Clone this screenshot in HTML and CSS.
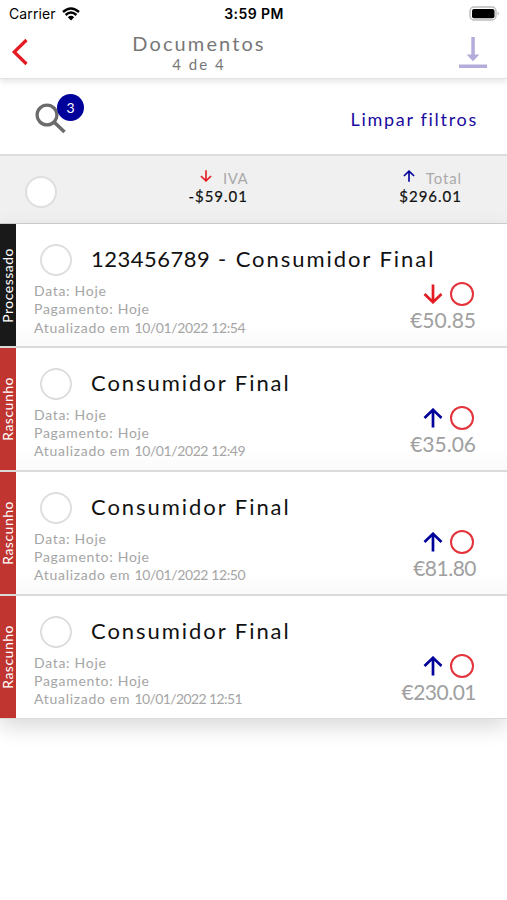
FILE: index.html
```html
<!DOCTYPE html>
<html lang="pt">
<head>
    <meta charset="UTF-8">
    <meta name="viewport" content="width=device-width, initial-scale=1.0">
    <title>Documentos</title>
    <link rel="stylesheet" href="styles.css">
</head>
<body>
    <svg class="sprite" width="0" height="0">
        <symbol id="arrow" viewBox="0 0 20 20">
            <path d="M10 19.5V2M1.5 10L10 1.8L18.5 10" fill="none" stroke="currentColor" stroke-width="2.7"/>
        </symbol>
    </svg>

    <header class="header">
        <div class="status-bar">
            <div class="carrier">
                <span class="carrier-name">Carrier</span>
                <svg width="18" height="14" viewBox="0 0 18 14">
                    <path d="M1 5Q9-2 17 5M3.6 8Q9 3 14.4 8" fill="none" stroke="#000" stroke-width="2.4"/>
                    <path d="M5.8 10.2Q9 7.4 12.2 10.2L9 13.6Z"/>
                </svg>
            </div>
            <div class="time">3:59 PM</div>
            <svg class="battery" width="32" height="16" viewBox="0 0 32 16">
                <rect x="1" y="1" width="26" height="13" rx="4" fill="#fff" stroke="#bbb" stroke-width="1.4"/>
                <rect x="3" y="3" width="22.5" height="9.3" rx="2"/>
                <path d="M28.7 5.5Q31 7.5 28.7 9.5Z" fill="#aaa"/>
            </svg>
        </div>
        <div class="nav">
            <svg class="back" width="18" height="28" viewBox="0 0 18 28">
                <path d="M15.5 2L3.2 14L15.5 26" fill="none" stroke="#e31b23" stroke-width="3.2"/>
            </svg>
            <div class="nav-title">
                <h1>Documentos</h1>
                <p>4 de 4</p>
            </div>
            <svg class="download" width="28" height="32" viewBox="0 0 28 32">
                <path d="M12.3 0h3.5v17.5h4.6L14 24.2L7.6 17.5h4.7ZM0 27.5h28v3.4H0Z" fill="#b3addb"/>
            </svg>
        </div>
    </header>

    <div class="filters">
        <div class="search">
            <svg width="32" height="32" viewBox="0 0 32 32">
                <circle cx="12" cy="12" r="9.9" fill="none" stroke="#6b6b6b" stroke-width="3.2"/>
                <path d="M19 19L29.5 29" stroke="#6b6b6b" stroke-width="3.6"/>
            </svg>
            <span class="badge">3</span>
        </div>
        <a class="clear-filters">Limpar filtros</a>
    </div>

    <div class="summary">
        <span class="check"></span>
        <div class="sum iva">
            <div class="sum-label"><svg class="small-arrow down"><use href="#arrow"/></svg><span>IVA</span></div>
            <div class="sum-value">-$59.01</div>
        </div>
        <div class="sum total">
            <div class="sum-label"><svg class="small-arrow up"><use href="#arrow"/></svg><span>Total</span></div>
            <div class="sum-value">$296.01</div>
        </div>
    </div>

    <main class="list">
        <div class="row">
            <div class="status processed"><span>Processado</span></div>
            <div class="content">
                <div class="client"><span class="check"></span><h2><span class="tax-id">123456789</span> - Consumidor Final</h2></div>
                <div class="details">
                    <div class="info">
                        <p>Data: Hoje</p>
                        <p>Pagamento: Hoje</p>
                        <p>Atualizado em <span class="stamp">10/01/2022 12:54</span></p>
                    </div>
                    <div class="amount">
                        <div class="icons"><svg class="arrow down"><use href="#arrow"/></svg><span class="ring"></span></div>
                        <div class="price">€50.85</div>
                    </div>
                </div>
            </div>
        </div>
        <div class="row">
            <div class="status draft"><span>Rascunho</span></div>
            <div class="content">
                <div class="client"><span class="check"></span><h2>Consumidor Final</h2></div>
                <div class="details">
                    <div class="info">
                        <p>Data: Hoje</p>
                        <p>Pagamento: Hoje</p>
                        <p>Atualizado em <span class="stamp">10/01/2022 12:49</span></p>
                    </div>
                    <div class="amount">
                        <div class="icons"><svg class="arrow up"><use href="#arrow"/></svg><span class="ring"></span></div>
                        <div class="price">€35.06</div>
                    </div>
                </div>
            </div>
        </div>
        <div class="row">
            <div class="status draft"><span>Rascunho</span></div>
            <div class="content">
                <div class="client"><span class="check"></span><h2>Consumidor Final</h2></div>
                <div class="details">
                    <div class="info">
                        <p>Data: Hoje</p>
                        <p>Pagamento: Hoje</p>
                        <p>Atualizado em <span class="stamp">10/01/2022 12:50</span></p>
                    </div>
                    <div class="amount">
                        <div class="icons"><svg class="arrow up"><use href="#arrow"/></svg><span class="ring"></span></div>
                        <div class="price narrow">€81.80</div>
                    </div>
                </div>
            </div>
        </div>
        <div class="row">
            <div class="status draft"><span>Rascunho</span></div>
            <div class="content">
                <div class="client"><span class="check"></span><h2>Consumidor Final</h2></div>
                <div class="details">
                    <div class="info">
                        <p>Data: Hoje</p>
                        <p>Pagamento: Hoje</p>
                        <p>Atualizado em <span class="stamp narrow">10/01/2022 12:51</span></p>
                    </div>
                    <div class="amount">
                        <div class="icons"><svg class="arrow up"><use href="#arrow"/></svg><span class="ring"></span></div>
                        <div class="price narrow">€230.01</div>
                    </div>
                </div>
            </div>
        </div>
    </main>
</body>
</html>
```
FILE: styles.css
```css
* {
    box-sizing: border-box;
}
body {
    margin: 0;
    min-height: 100vh;
    background-color: #fff;
    color: #111;
    font-family: Lato, sans-serif;
}
h1, h2, p {
    margin: 0;
    font-weight: 400;
}
svg {
    display: block;
    flex-shrink: 0;
}
.sprite {
    display: none;
}

/* header */
.header {
    height: 79px;
    border-bottom: 1px solid #e2e2e2;
    box-shadow: 0 3px 6px rgba(0, 0, 0, 0.1);
}
.status-bar {
    display: grid;
    grid-template-columns: 1fr auto 1fr;
    align-items: center;
    height: 27px;
    padding: 0 6px 0 9px;
    font-family: Inter, sans-serif;
    font-size: 14px;
    color: #000;
}
.carrier {
    display: flex;
    align-items: center;
    gap: 6px;
    letter-spacing: 0.1px;
}
.time {
    font-weight: 600;
    font-size: 14px;
    letter-spacing: 0.4px;
    margin-right: 2px;
}
.battery {
    justify-self: end;
}
.nav {
    display: grid;
    grid-template-columns: 110px 178px 1fr;
    align-items: start;
}
.back {
    margin: 11px 0 0 11px;
}
.nav-title {
    text-align: center;
    color: #777;
}
.nav-title h1 {
    font-size: 20px;
    line-height: 24px;
    margin-top: 4px;
    letter-spacing: 2.1px;
}
.nav-title p {
    font-size: 15px;
    line-height: 19px;
    letter-spacing: 2px;
}
.download {
    justify-self: end;
    margin: 10px 20px 0 0;
}

/* filters */
.filters {
    display: flex;
    justify-content: space-between;
    height: 75px;
    padding: 0 29px 0 35px;
}
.search {
    position: relative;
    height: 32px;
    margin-top: 24px;
}
.badge {
    position: absolute;
    left: 22px;
    top: -9px;
    width: 27px;
    height: 27px;
    border-radius: 50%;
    background-color: #00009b;
    color: #fff;
    font-size: 14px;
    line-height: 27px;
    text-align: center;
}
.clear-filters {
    margin-top: 28px;
    color: #1a0aa0;
    font-size: 18px;
    line-height: 24px;
    letter-spacing: 1.7px;
}

/* totals */
.summary {
    display: grid;
    grid-template-columns: 57px 191px 214px;
    height: 70px;
    border-top: 2px solid #dcdcdc;
    border-bottom: 1px solid #d0d0d0;
    background-color: #f0f0f0;
}
.check {
    width: 32px;
    height: 32px;
    border: 2px solid #dedede;
    border-radius: 50%;
    background-color: #fff;
    flex-shrink: 0;
}
.summary .check {
    margin: 20px 0 0 25px;
}
.sum {
    margin-top: 13px;
    text-align: right;
}
.sum-label {
    display: flex;
    justify-content: flex-end;
    gap: 11px;
    height: 18px;
    color: #aaa;
    font-size: 15px;
    line-height: 18px;
    letter-spacing: 0.4px;
}
.total .sum-label {
    letter-spacing: 0.9px;
}
.sum-value {
    font-size: 15px;
    line-height: 19px;
    letter-spacing: 1px;
    -webkit-text-stroke: 0.2px #111;
}
.small-arrow {
    width: 12px;
    height: 12px;
    margin-top: 1px;
}
.up {
    color: #00009b;
}
.down {
    color: #e31b23;
    transform: rotate(180deg);
}

/* documents */
.list {
    box-shadow: 0 8px 20px rgba(0, 0, 0, 0.15);
}
.row {
    display: flex;
    height: 123.9px;
    border-bottom: 2px solid #dadada;
    background-color: #fff;
}
.row:last-child {
    height: 123px;
    border-bottom-width: 1px;
}
.status {
    display: flex;
    align-items: center;
    justify-content: center;
    width: 16px;
    color: #fff;
    font-size: 14px;
    letter-spacing: 0.5px;
}
.status span {
    writing-mode: vertical-rl;
    transform: rotate(180deg);
    line-height: 16px;
}
.processed {
    background-color: #191919;
}
.draft {
    background-color: #c03530;
}
.content {
    flex: 1;
    padding: 20px 31px 0 18px;
    background: linear-gradient(#fff 82%, #fafafa);
}
.row:last-child .content {
    background: #fff;
}
.client {
    display: flex;
    align-items: center;
    gap: 19px;
    height: 32px;
    padding-left: 6px;
}
.client h2 {
    font-size: 22px;
    line-height: 30px;
    padding-bottom: 2px;
    letter-spacing: 1.95px;
    white-space: nowrap;
}
.client .tax-id {
    letter-spacing: 0.5px;
}
.details {
    display: flex;
    justify-content: space-between;
}
.info {
    margin-top: 6px;
    color: #a5a5a5;
    font-size: 14px;
    line-height: 18.3px;
    letter-spacing: 0.7px;
}
.stamp {
    letter-spacing: -0.4px;
}
.stamp.narrow {
    letter-spacing: -0.6px;
}
.amount {
    padding-top: 6px;
}
.icons {
    display: flex;
    align-items: center;
    justify-content: flex-end;
    gap: 7px;
    height: 24px;
    padding-right: 2px;
}
.arrow {
    width: 20px;
    height: 20px;
}
.ring {
    width: 24px;
    height: 24px;
    border: 2px solid #e5323a;
    border-radius: 50%;
}
.price {
    color: #a0a0a0;
    font-size: 21px;
    line-height: 28px;
    text-align: right;
}
.price.narrow {
    letter-spacing: -0.5px;
}
```
